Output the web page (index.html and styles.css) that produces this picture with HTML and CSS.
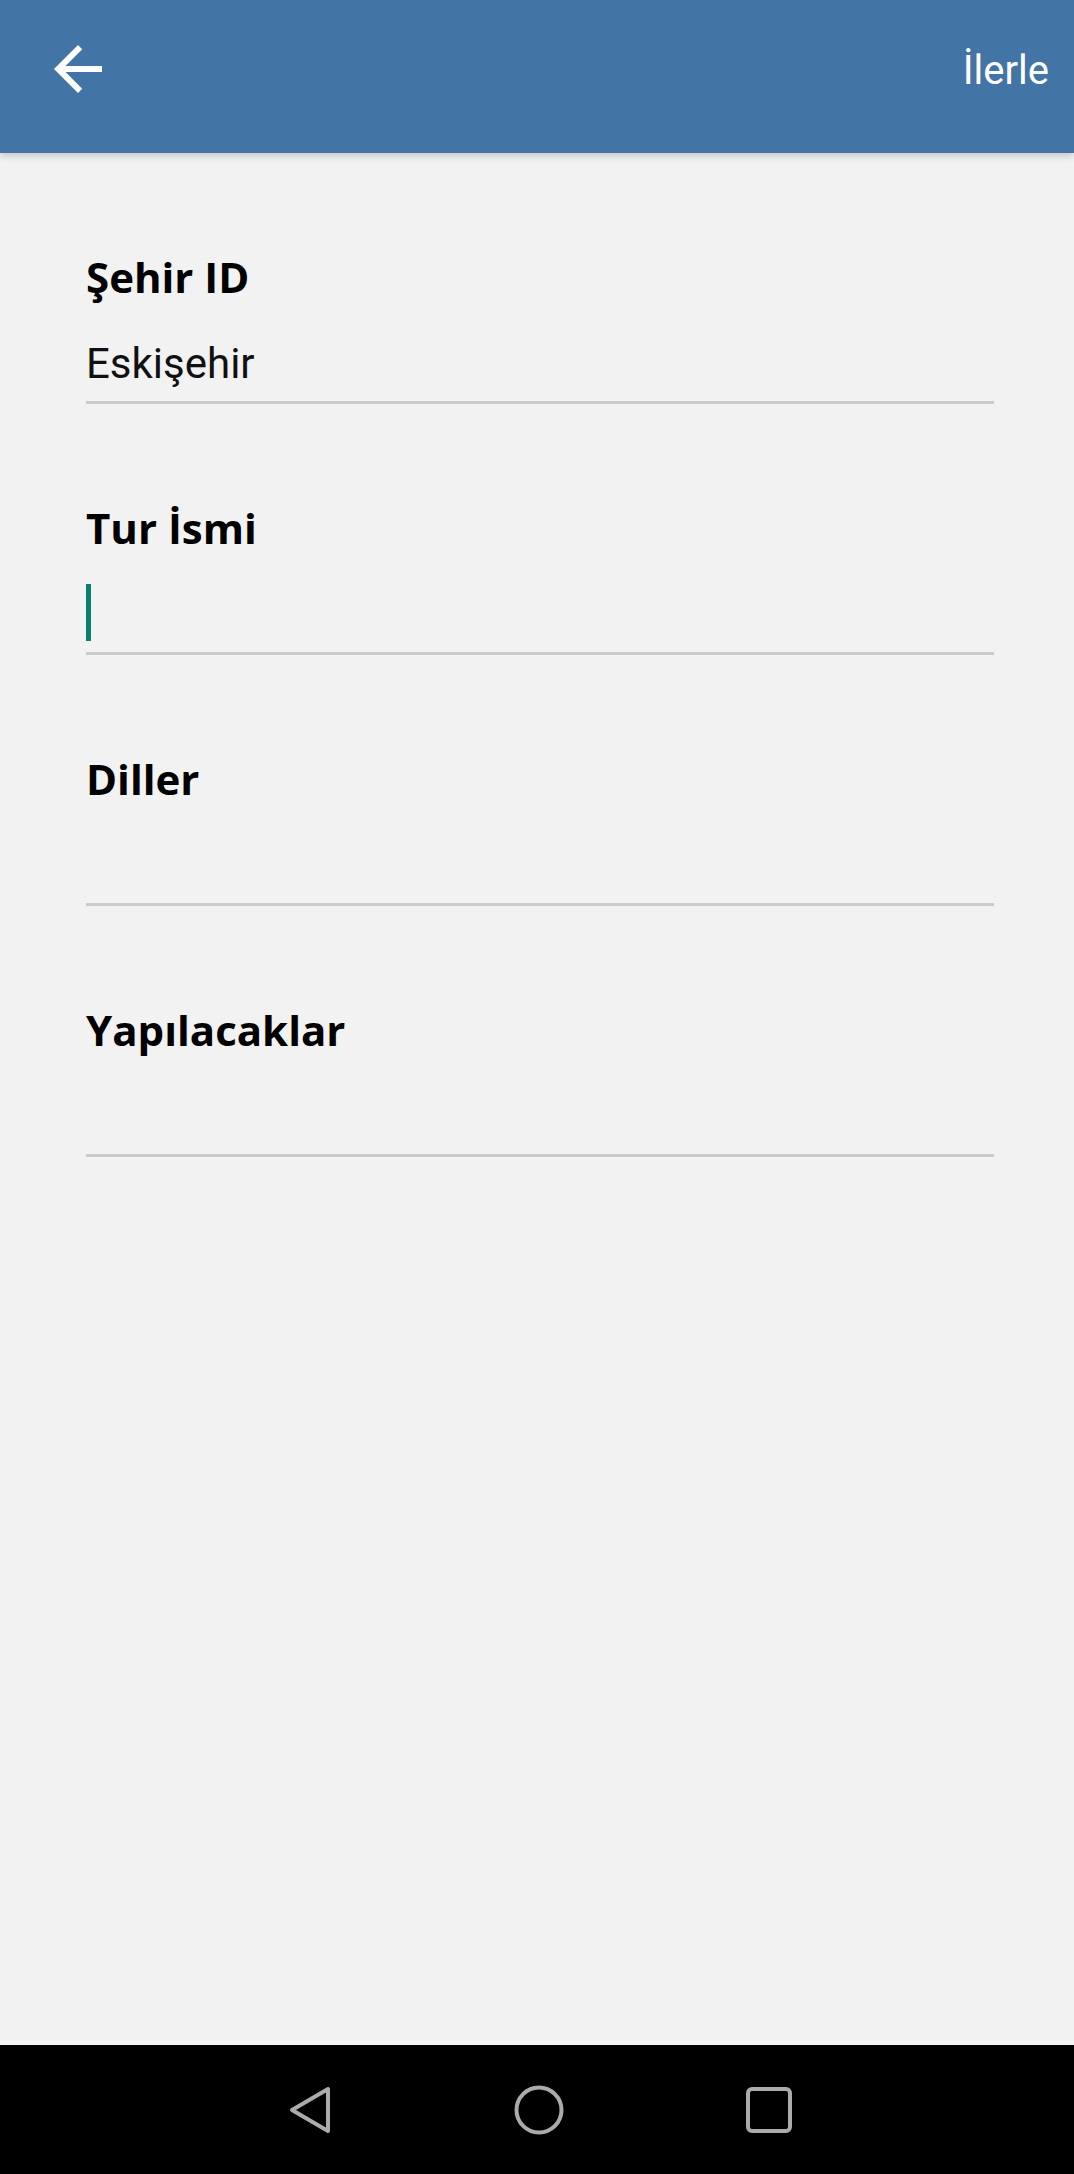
FILE: index.html
```html
<!DOCTYPE html>
<html lang="tr">
<head>
<meta charset="utf-8">
<title>Tur Ekle</title>
<link rel="stylesheet" href="styles.css">
</head>
<body>
<header class="toolbar">
  <svg class="back" viewBox="0 0 24 24" width="72" height="72"><path fill="#fff" d="M20 11H7.83l5.59-5.59L12 4l-8 8 8 8 1.41-1.41L7.83 13H20v-2z"/></svg>
  <span class="next">İlerle</span>
</header>
<main class="form">
  <div class="field">
    <div class="label">Şehir ID</div>
    <div class="input">Eskişehir</div>
  </div>
  <div class="field">
    <div class="label">Tur İsmi</div>
    <div class="input"><span class="cursor"></span></div>
  </div>
  <div class="field">
    <div class="label">Diller</div>
    <div class="input"></div>
  </div>
  <div class="field">
    <div class="label">Yapılacaklar</div>
    <div class="input"></div>
  </div>
</main>
<nav class="navbar">
  <svg class="nav-back" viewBox="0 0 44 50" width="44" height="50"><polygon points="4,25 40,4 40,46" fill="none" stroke="#ababab" stroke-width="4" stroke-linejoin="round"/></svg>
  <svg class="nav-home" viewBox="0 0 50 50" width="50" height="50"><circle cx="25" cy="25" r="22.5" fill="none" stroke="#ababab" stroke-width="4"/></svg>
  <svg class="nav-recent" viewBox="0 0 46 46" width="46" height="46"><rect x="2" y="2" width="42" height="42" rx="4" fill="none" stroke="#ababab" stroke-width="4"/></svg>
</nav>
</body>
</html>
```

FILE: styles.css
```css
* { box-sizing: border-box; }
html, body { margin: 0; padding: 0; }
body {
  background: #f2f2f2;
  min-height: 100vh;
  display: flex;
  flex-direction: column;
  font-family: Roboto, "Noto Sans", sans-serif;
}
.toolbar {
  height: 153px;
  background: #4274a5;
  display: flex;
  justify-content: space-between;
  align-items: flex-start;
  padding: 33px 25px 0 42px;
  box-shadow: 0 2px 8px rgba(0,0,0,0.22);
  position: relative;
  z-index: 1;
  flex-shrink: 0;
}
.back { display: block; }
.next {
  color: #fff;
  font-family: Roboto, sans-serif;
  font-size: 40px;
  line-height: 44px;
  margin-top: 16px;
}
.form {
  flex: 1;
  padding: 0 80px 0 86px;
}
.field { margin-top: 96px; }
.label {
  font-family: "Open Sans", "Noto Sans", sans-serif;
  font-weight: 700;
  font-size: 42px;
  line-height: 56px;
  color: #000;
}
.input {
  margin-top: 31px;
  height: 68px;
  padding-bottom: 9px;
  border-bottom: 3px solid #cbcbcb;
  font-family: Roboto, sans-serif;
  font-size: 42px;
  line-height: 56px;
  color: #111;
  display: flex;
  align-items: center;
}
.cursor {
  display: block;
  width: 5px;
  height: 57px;
  margin-bottom: 5px;
  background: #08806f;
}
.navbar {
  height: 129px;
  background: #000;
  display: flex;
  justify-content: center;
  align-items: center;
  gap: 182px;
  padding-left: 5px;
  flex-shrink: 0;
}
.navbar svg { display: block; }
```
